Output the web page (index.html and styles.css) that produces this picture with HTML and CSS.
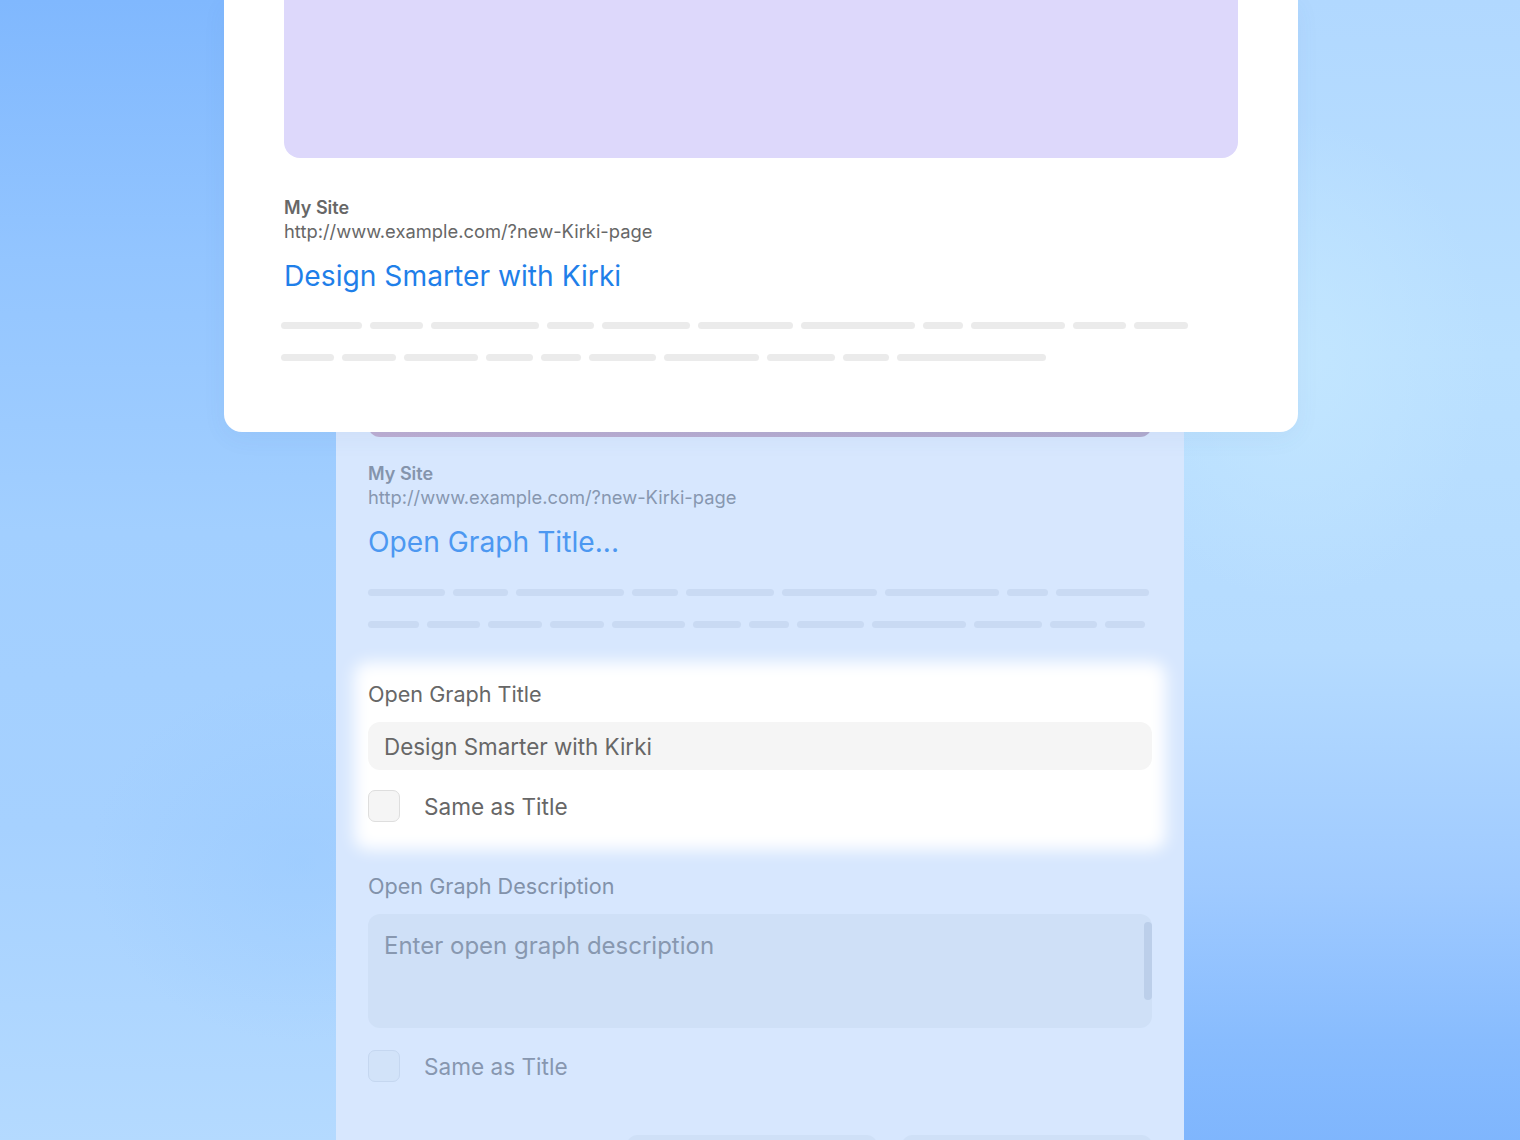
FILE: index.html
```html
<!DOCTYPE html>
<html lang="en">
<head>
<meta charset="utf-8">
<title>Open Graph preview</title>
<link rel="stylesheet" href="styles.css">
</head>
<body>
<div class="stage">
  <div class="bg-left"></div>
  <main class="panel">
    <div class="panel-image"></div>
    <div class="meta meta-faded">
      <div class="site">My Site</div>
      <div class="url">http://www.example.com/?new-Kirki-page</div>
      <div class="og-title">Open Graph Title...</div>
      <div class="skel-row first">
        <span class="skel" style="width:77px"></span><span class="skel" style="width:55px"></span><span class="skel" style="width:108px"></span><span class="skel" style="width:46px"></span><span class="skel" style="width:88px"></span><span class="skel" style="width:95px"></span><span class="skel" style="width:114px"></span><span class="skel" style="width:41px"></span><span class="skel" style="width:93px"></span>
      </div>
      <div class="skel-row">
        <span class="skel" style="width:51px"></span><span class="skel" style="width:53px"></span><span class="skel" style="width:54px"></span><span class="skel" style="width:54px"></span><span class="skel" style="width:73px"></span><span class="skel" style="width:48px"></span><span class="skel" style="width:40px"></span><span class="skel" style="width:67px"></span><span class="skel" style="width:94px"></span><span class="skel" style="width:68px"></span><span class="skel" style="width:47px"></span><span class="skel" style="width:40px"></span>
      </div>
    </div>

    <section class="field-box">
      <label class="field-label">Open Graph Title</label>
      <div class="input">Design Smarter with Kirki</div>
      <div class="check-row">
        <span class="checkbox"></span>
        <span class="check-text">Same as Title</span>
      </div>
    </section>

    <section class="field-faded">
      <label class="field-label">Open Graph Description</label>
      <div class="textarea">
        <span class="placeholder">Enter open graph description</span>
        <span class="scrollbar"></span>
      </div>
      <div class="check-row">
        <span class="checkbox"></span>
        <span class="check-text">Same as Title</span>
      </div>
      <div class="buttons">
        <span class="btn"></span>
        <span class="btn"></span>
      </div>
    </section>
  </main>
  <div class="bg-right"></div>

  <article class="card">
    <div class="card-image"></div>
    <div class="meta">
      <div class="site">My Site</div>
      <div class="url">http://www.example.com/?new-Kirki-page</div>
      <div class="og-title">Design Smarter with Kirki</div>
      <div class="skel-row first">
        <span class="skel" style="width:81px"></span><span class="skel" style="width:53px"></span><span class="skel" style="width:108px"></span><span class="skel" style="width:47px"></span><span class="skel" style="width:88px"></span><span class="skel" style="width:95px"></span><span class="skel" style="width:114px"></span><span class="skel" style="width:40px"></span><span class="skel" style="width:94px"></span><span class="skel" style="width:53px"></span><span class="skel" style="width:54px"></span>
      </div>
      <div class="skel-row">
        <span class="skel" style="width:53px"></span><span class="skel" style="width:54px"></span><span class="skel" style="width:74px"></span><span class="skel" style="width:47px"></span><span class="skel" style="width:40px"></span><span class="skel" style="width:67px"></span><span class="skel" style="width:95px"></span><span class="skel" style="width:68px"></span><span class="skel" style="width:46px"></span><span class="skel" style="width:149px"></span>
      </div>
    </div>
  </article>
</div>
</body>
</html>
```

FILE: styles.css
```css
* { box-sizing: border-box; }

html, body {
  margin: 0;
  padding: 0;
  width: 1520px;
  height: 1140px;
  overflow: hidden;
  font-family: Inter, "Noto Sans", "Liberation Sans", sans-serif;
}

.stage {
  position: relative;
  width: 1520px;
  height: 1140px;
  display: grid;
  grid-template-columns: 336px 848px 1fr;
  overflow: hidden;
}

.bg-left {
  background:
    radial-gradient(ellipse 300px 260px at 300px 860px, rgba(150,200,255,0.45), rgba(150,200,255,0) 70%),
    linear-gradient(to bottom, #80b8fe 0%, #93c5ff 22%, #a2cfff 45%, #a6d1ff 70%, #b6dbff 100%);
}

.bg-right {
  background:
    radial-gradient(ellipse 260px 320px at 110px 360px, rgba(196,231,255,0.85), rgba(196,231,255,0) 75%),
    linear-gradient(to bottom, #b1d8ff 0%, #bae0ff 30%, #b5dbff 55%, #9fcaff 75%, #88bcfe 88%, #7bb3fd 100%);
}

/* ---------- back panel ---------- */
.panel {
  background: #d7e7fe;
  padding: 0 32px;
  display: flex;
  flex-direction: column;
}

.panel-image {
  height: 437px;
  border-radius: 0 0 12px 12px;
  background: linear-gradient(to right, #bdaed3, #b1abcf);
  flex: none;
}

.meta-faded { padding-top: 25px; }

.meta-faded .site { color: #8494ac; }
.meta-faded .url { color: #8797b0; }
.meta-faded .og-title { color: #4c98f1; }
.meta-faded .skel { background: #c9daf3; }

/* ---------- shared meta ---------- */
.site {
  font-size: 18px;
  line-height: 24px;
  font-weight: 600;
  color: #676767;
}

.url {
  margin-top: -1px;
  font-size: 18.35px;
  line-height: 24px;
  color: #676767;
}

.og-title {
  margin-top: 15px;
  font-size: 28.2px;
  line-height: 36px;
  color: #1f7fe9;
}

.skel-row {
  display: flex;
  gap: 8px;
  height: 7px;
  margin-top: 25px;
}

.skel-row.first { margin-top: 29px; }

.skel {
  display: block;
  height: 7px;
  border-radius: 4px;
  background: #ebebeb;
  flex: none;
}

/* ---------- highlighted field ---------- */
.field-box {
  position: relative;
  isolation: isolate;
  margin: 34px -14px 2px;
  padding: 18px 14px 28px;
}

.field-box::before {
  content: "";
  position: absolute;
  inset: 0;
  z-index: -1;
  background: #ffffff;
  border-radius: 14px;
  filter: blur(8px);
}

.field-label {
  display: block;
  font-size: 21.6px;
  line-height: 28px;
  color: #676767;
}

.input {
  margin-top: 14px;
  height: 48px;
  border-radius: 12px;
  background: #f5f5f5;
  padding: 0 16px;
  display: flex;
  align-items: center;
  font-size: 22.4px;
  color: #676767;
}

.check-row {
  margin-top: 20px;
  display: flex;
  align-items: center;
  gap: 24px;
  height: 32px;
}

.checkbox {
  width: 32px;
  height: 32px;
  border-radius: 7px;
  border: 1px solid #dedede;
  background: #f5f5f5;
  flex: none;
}

.check-text {
  font-size: 22.6px;
  color: #676767;
}

/* ---------- faded lower field ---------- */
.field-faded { margin-top: 20px; }

.field-faded .field-label { color: #8292aa; }

.textarea {
  position: relative;
  margin-top: 14px;
  height: 114px;
  border-radius: 12px;
  background: #cfe0f7;
  padding: 15px 16px;
}

.placeholder {
  font-size: 24px;
  line-height: 34px;
  color: #8898b0;
}

.scrollbar {
  position: absolute;
  right: 0;
  top: 8px;
  width: 8px;
  height: 78px;
  border-radius: 4px;
  background: #bccfea;
}

.field-faded .check-row { margin-top: 22px; }
.field-faded .checkbox { background: #d2e3f9; border-color: #c5d7f0; }
.field-faded .check-text { color: #8797b0; }

.buttons {
  margin-top: 53px;
  display: flex;
  justify-content: flex-end;
  gap: 25px;
}

.btn {
  width: 250px;
  height: 48px;
  border-radius: 10px;
  background: #cfe0f7;
}

/* ---------- front card (overlay) ---------- */
.card {
  position: absolute;
  left: 224px;
  top: 0;
  width: 1074px;
  height: 432px;
  background: #ffffff;
  border-radius: 0 0 18px 18px;
  padding: 0 60px;
  box-shadow: 0 6px 24px rgba(60,100,160,0.06);
}

.card-image {
  height: 158px;
  background: #ddd8fb;
  border-radius: 0 0 16px 16px;
}

.card .meta { padding-top: 38px; }
.card .skel-row { margin-left: -3px; }
.card .skel-row.first { margin-top: 28px; }
```
